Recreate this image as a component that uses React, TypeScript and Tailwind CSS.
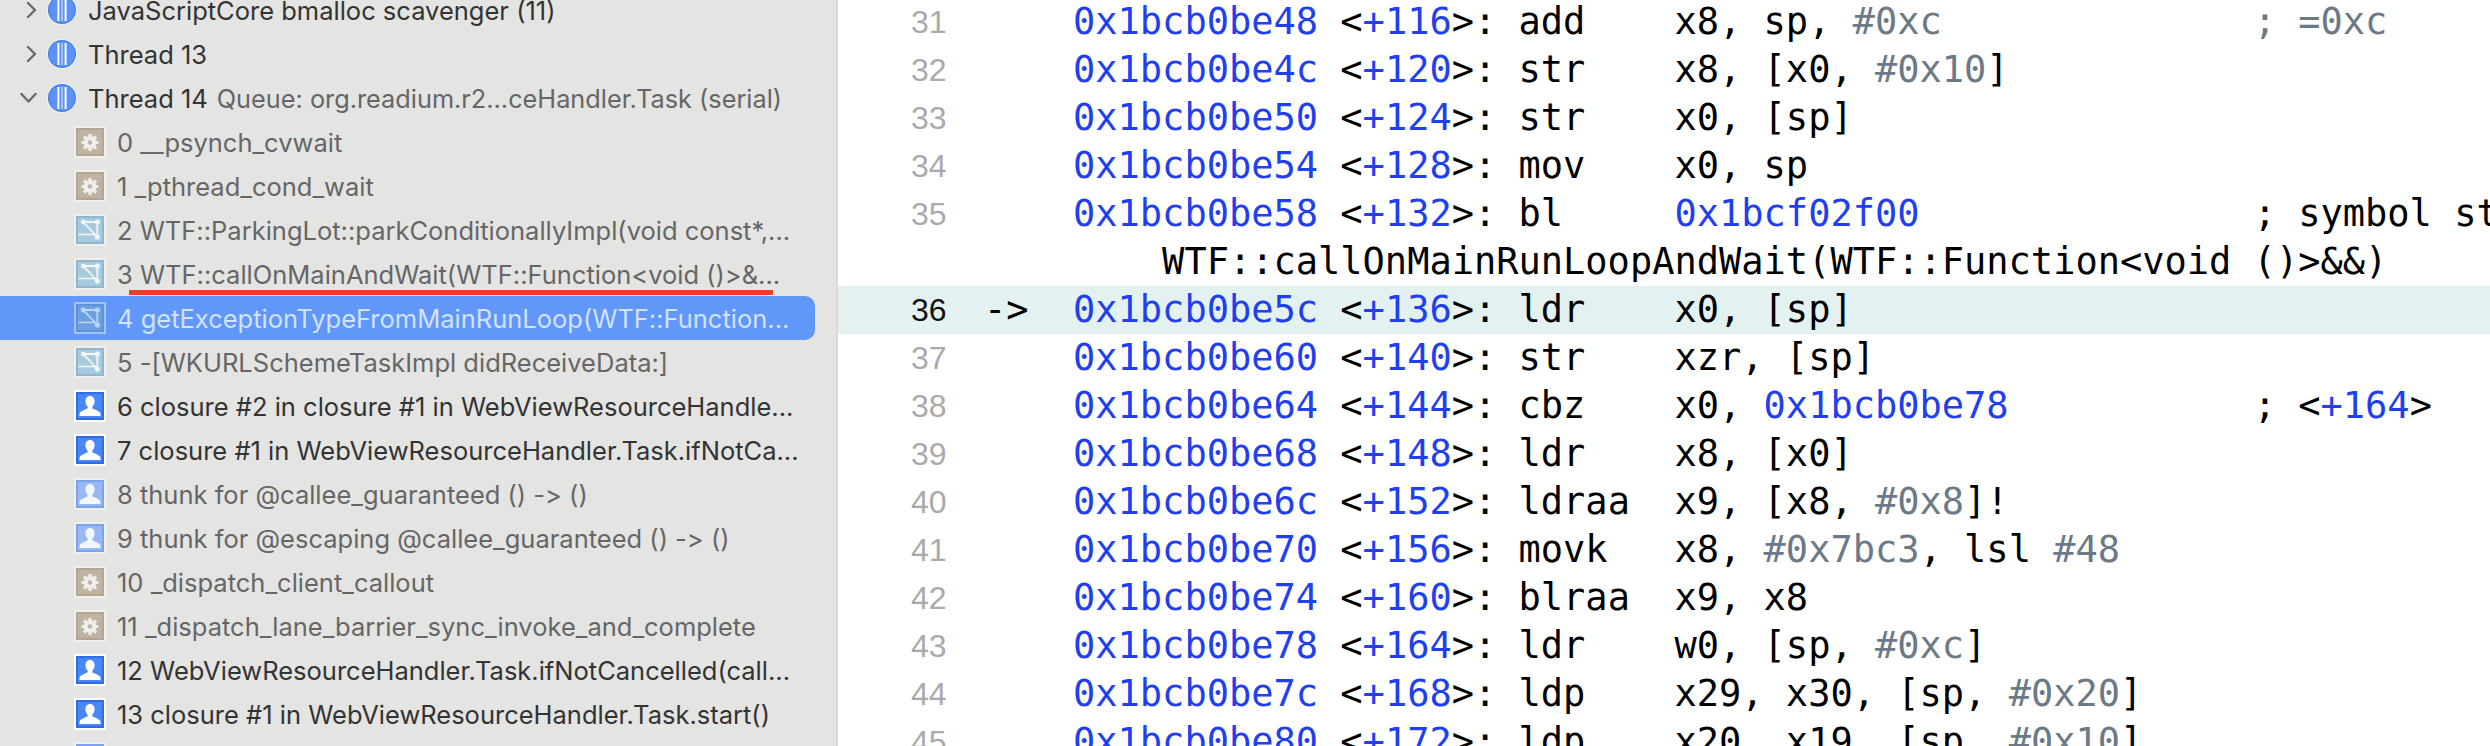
import React from "react";

const mono = "font-['DejaVu_Sans_Mono','Liberation_Mono',monospace]";

function Chevron({ open }: { open?: boolean }) {
  return (
    <svg width="18" height="16" viewBox="0 0 18 16" className="shrink-0" fill="none" stroke="#6b6b6b" strokeWidth="2.4" strokeLinecap="round" strokeLinejoin="round">
      {open ? <path d="M1.5 4 L8.5 11.5 L15.5 4" /> : <path d="M8 1 L15 8 L8 15" />}
    </svg>
  );
}

function ThreadIcon() {
  return (
    <svg width="30" height="30" viewBox="0 0 30 30" className="shrink-0">
      <circle cx="15" cy="15" r="15" fill="#f1f3f8" />
      <circle cx="15" cy="15" r="14" fill="#3f7ae8" />
      <circle cx="15" cy="15" r="13" fill="#5b92f5" />
      <rect x="10.4" y="4" width="2" height="22" fill="#fff" />
      <rect x="14.4" y="4" width="1.2" height="22" fill="#d6e4fc" />
      <rect x="17.6" y="4" width="2" height="22" fill="#fff" />
    </svg>
  );
}

function FrameIcon({ kind, dim, sel }: { kind: "gear" | "graph" | "user"; dim?: boolean; sel?: boolean }) {
  const palette = {
    gear: { b: "#b3a592", f: "#bfb3a3", g: "#f0eeea", o: "#efefed" },
    graph: sel
      ? { b: "#5d93d8", f: "#6ca0e0", g: "#bcd6f5", o: "#a3c3f8" }
      : { b: "#8fb8d0", f: "#a9c9dc", g: "#f0f6f9", o: "#efefed" },
    user: dim
      ? { b: "#7ca3ee", f: "#9ab9f2", g: "#f2f6fe", o: "#efefed" }
      : { b: "#2f6ce6", f: "#4a86f6", g: "#ffffff", o: "#ffffff" },
  }[kind];
  return (
    <svg width="32" height="32" viewBox="0 0 32 32" className="shrink-0">
      <rect width="32" height="32" fill={palette.o} />
      <rect x="2" y="2" width="28" height="28" fill={palette.b} />
      <rect x="4" y="4" width="24" height="24" fill={palette.f} />
      {kind === "gear" && (
        <g>
          <g stroke={palette.g} strokeWidth="3.2">
            <path d="M16 8 V25 M7.5 16.5 H24.5 M10 10.5 L22 22.5 M22 10.5 L10 22.5" />
          </g>
          <circle cx="16" cy="16.5" r="6.4" fill={palette.g} />
          <circle cx="16" cy="16.5" r="2.2" fill={palette.f} />
        </g>
      )}
      {kind === "graph" && (
        <g stroke={palette.g} strokeWidth="1.8" fill={palette.g}>
          <path d="M9.3 8 H23.3 V23 L9.3 8" fill="none" />
          <path d="M4.5 20.5 H22" fill="none" strokeWidth="1.6" />
          <circle cx="9.3" cy="8" r="2.4" stroke="none" />
          <circle cx="23.3" cy="8" r="2.6" stroke="none" />
          <circle cx="23.3" cy="23" r="2.6" stroke="none" />
        </g>
      )}
      {kind === "user" && (
        <path
          fill={palette.g}
          d="M16 6 c-3 0 -4.6 2.4 -4.6 5.2 c0 2.2 .9 4.2 2.2 5.4 v1.6 c-1 1 -6.4 2.4 -7.6 4.4 c-.5 .9 -.6 2.4 -.6 3.4 h21.2 c0 -1 -.1 -2.5 -.6 -3.4 c-1.2 -2 -6.6 -3.4 -7.6 -4.4 v-1.6 c1.3 -1.2 2.2 -3.2 2.2 -5.4 c0 -2.8 -1.6 -5.2 -4.6 -5.2 z"
        />
      )}
    </svg>
  );
}

function ThreadRow({ label, queue, open }: { label: string; queue?: string; open?: boolean }) {
  return (
    <div className="flex h-[44px] items-center">
      <div className="flex w-[47px] shrink-0 justify-end pr-[9px]">
        <Chevron open={open} />
      </div>
      <ThreadIcon />
      <span className="ml-[11px] whitespace-nowrap pt-[2px] text-[#333333]">{label}</span>
      {queue && <span className="ml-[9px] whitespace-nowrap pt-[2px] text-[25.3px] text-[#666666]">{queue}</span>}
    </div>
  );
}

const frames: { t: string; k: "gear" | "graph" | "user"; dim?: boolean; sel?: boolean; mark?: boolean }[] = [
  { t: "0 __psynch_cvwait", k: "gear", dim: true },
  { t: "1 _pthread_cond_wait", k: "gear", dim: true },
  { t: "2 WTF::ParkingLot::parkConditionallyImpl(void const*,...", k: "graph", dim: true },
  { t: "3 WTF::callOnMainAndWait(WTF::Function<void ()>&...", k: "graph", dim: true, mark: true },
  { t: "4 getExceptionTypeFromMainRunLoop(WTF::Function...", k: "graph", sel: true },
  { t: "5 -[WKURLSchemeTaskImpl didReceiveData:]", k: "graph", dim: true },
  { t: "6 closure #2 in closure #1 in WebViewResourceHandle...", k: "user" },
  { t: "7 closure #1 in WebViewResourceHandler.Task.ifNotCa...", k: "user" },
  { t: "8 thunk for @callee_guaranteed () -> ()", k: "user", dim: true },
  { t: "9 thunk for @escaping @callee_guaranteed () -> ()", k: "user", dim: true },
  { t: "10 _dispatch_client_callout", k: "gear", dim: true },
  { t: "11 _dispatch_lane_barrier_sync_invoke_and_complete", k: "gear", dim: true },
  { t: "12 WebViewResourceHandler.Task.ifNotCancelled(call...", k: "user" },
  { t: "13 closure #1 in WebViewResourceHandler.Task.start()", k: "user" },
  { t: "14 thunk for @escaping @callee_guaranteed () -> ()", k: "user", dim: true },
];

function FrameRow({ f }: { f: (typeof frames)[number] }) {
  const color = f.sel ? "text-[#d3e2fd]" : f.dim ? "text-[#666666]" : "text-[#333333]";
  return (
    <div className={`relative flex h-[44px] items-center pl-[74px] ${f.sel ? "mr-[21px] rounded-r-[10px] bg-[#6097f8]" : ""}`}>
      <FrameIcon kind={f.k} dim={f.dim} sel={f.sel} />
      <span className={`ml-[11px] whitespace-nowrap pt-[2px] ${color}`}>{f.t}</span>
      {f.mark && <div className="absolute bottom-px left-[129px] h-[5px] w-[644px] bg-[#ee3f24]" />}
    </div>
  );
}

type Seg = { s: string; c?: "blue" | "gray" };
const B = (s: string): Seg => ({ s, c: "blue" });
const K = (s: string): Seg => ({ s });
const G = (s: string): Seg => ({ s, c: "gray" });

function pad(s: string, n: number) {
  return s + " ".repeat(Math.max(0, n - s.length));
}

function ins(addr: string, off: string, op: string, args: Seg[], comment: Seg[] = []): Seg[] {
  const argLen = args.reduce((a, x) => a + x.s.length, 0);
  const out: Seg[] = [B(addr), K(" <"), B("+" + off), K(">: " + pad(op, 7)), ...args];
  if (comment.length) out.push(K(" ".repeat(Math.max(1, 26 - argLen))), ...comment);
  return out;
}

const rows: { n?: number; cur?: boolean; segs: Seg[]; cont?: boolean }[] = [
  { n: 31, segs: ins("0x1bcb0be48", "116", "add", [K("x8, sp, "), G("#0xc")], [G("; =0xc")]) },
  { n: 32, segs: ins("0x1bcb0be4c", "120", "str", [K("x8, [x0, "), G("#0x10"), K("]")]) },
  { n: 33, segs: ins("0x1bcb0be50", "124", "str", [K("x0, [sp]")]) },
  { n: 34, segs: ins("0x1bcb0be54", "128", "mov", [K("x0, sp")]) },
  { n: 35, segs: ins("0x1bcb0be58", "132", "bl", [B("0x1bcf02f00")], [K("; symbol stub for:")]) },
  { cont: true, segs: [K("    WTF::callOnMainRunLoopAndWait(WTF::Function<void ()>&&)")] },
  { n: 36, cur: true, segs: ins("0x1bcb0be5c", "136", "ldr", [K("x0, [sp]")]) },
  { n: 37, segs: ins("0x1bcb0be60", "140", "str", [K("xzr, [sp]")]) },
  { n: 38, segs: ins("0x1bcb0be64", "144", "cbz", [K("x0, "), B("0x1bcb0be78")], [K("; <"), B("+164"), K(">")]) },
  { n: 39, segs: ins("0x1bcb0be68", "148", "ldr", [K("x8, [x0]")]) },
  { n: 40, segs: ins("0x1bcb0be6c", "152", "ldraa", [K("x9, [x8, "), G("#0x8"), K("]!")]) },
  { n: 41, segs: ins("0x1bcb0be70", "156", "movk", [K("x8, "), G("#0x7bc3"), K(", lsl "), G("#48")]) },
  { n: 42, segs: ins("0x1bcb0be74", "160", "blraa", [K("x9, x8")]) },
  { n: 43, segs: ins("0x1bcb0be78", "164", "ldr", [K("w0, [sp, "), G("#0xc"), K("]")]) },
  { n: 44, segs: ins("0x1bcb0be7c", "168", "ldp", [K("x29, x30, [sp, "), G("#0x20"), K("]")]) },
  { n: 45, segs: ins("0x1bcb0be80", "172", "ldp", [K("x20, x19, [sp, "), G("#0x10"), K("]")]) },
];

function CodeRow({ r }: { r: (typeof rows)[number] }) {
  return (
    <div className={`flex h-[48px] items-center whitespace-pre ${r.cur ? "bg-[#e3f1f0]" : ""}`}>
      <div className={`w-[91px] shrink-0 pl-[73px] font-['Liberation_Sans',sans-serif] text-[32px] ${r.cur ? "text-[#111111]" : "text-[#aaaaaa]"}`}>
        {r.n ?? ""}
      </div>
      <div className="w-[144px] shrink-0 pl-[55px] text-black">{r.cur ? "->" : ""}</div>
      <div className="min-w-0">
        {r.segs.map((s, i) => (
          <span key={i} className={s.c === "blue" ? "text-[#1f3ff0]" : s.c === "gray" ? "text-[#6c7986]" : "text-black"}>
            {s.s}
          </span>
        ))}
      </div>
    </div>
  );
}

export default function App() {
  return (
    <div className="flex h-[746px] w-[2490px] overflow-hidden bg-white">
      <aside className="-mt-[12px] h-[770px] w-[838px] shrink-0 overflow-hidden border-r-2 border-[#d9d9d7] bg-[#e4e4e3] font-['Inter','Liberation_Sans',sans-serif] text-[25.5px] [font-variant-ligatures:none]">
        <ThreadRow label="JavaScriptCore bmalloc scavenger (11)" />
        <ThreadRow label="Thread 13" />
        <ThreadRow label="Thread 14" queue="Queue: org.readium.r2...ceHandler.Task (serial)" open />
        {frames.map((f) => (
          <FrameRow key={f.t} f={f} />
        ))}
      </aside>
      <main className={`-mt-[2px] min-w-0 flex-1 overflow-hidden ${mono} text-[37px]`}>
        {rows.map((r, i) => (
          <CodeRow key={i} r={r} />
        ))}
      </main>
    </div>
  );
}
